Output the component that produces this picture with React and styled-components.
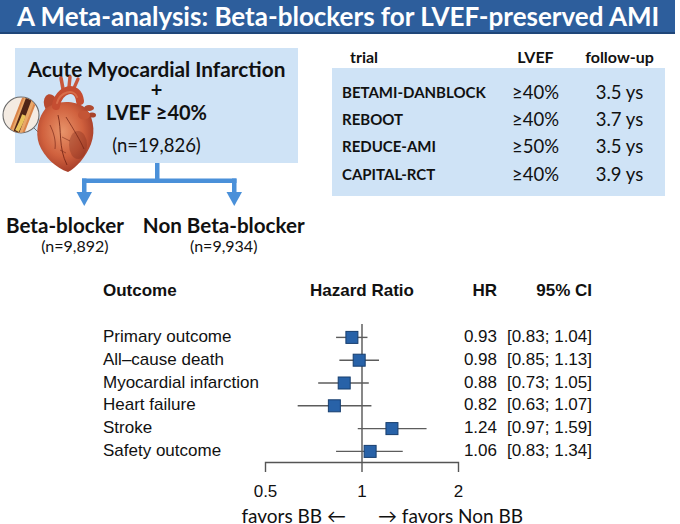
import React from "react";
import styled, { createGlobalStyle } from "styled-components";

const Global = createGlobalStyle`
  html, body { margin: 0; padding: 0; background: #fff; }
  body { font-family: Lato, "Open Sans", sans-serif; color: #111; }
`;

const CAL = `Lato, "Open Sans", sans-serif`;
const HEL = `"Liberation Sans", Arial, sans-serif`;

const Page = styled.div`
  width: 680px;
  height: 524px;
  overflow: hidden;
  background: #fff;
`;

const Header = styled.header`
  height: 32px;
  margin-right: 5px;
  background: #2d5e9c;
  border-bottom: 2px solid #1f4679;
  color: #fff;
  font: 700 26px ${CAL};
  display: flex;
  align-items: center;
  padding-left: 17px;
  white-space: nowrap;
`;

const Top = styled.section`
  display: flex;
  align-items: flex-start;
`;

const LeftCol = styled.div`
  position: relative;
  width: 320px;
  flex: none;
`;

const PopBox = styled.div`
  margin: 14px 0 0 15px;
  width: 283px;
  height: 115px;
  box-sizing: border-box;
  background: #cfe3f6;
  display: flex;
  flex-direction: column;
  align-items: center;
  padding-top: 10px;
  font-family: ${CAL};
`;

const BoxLine = styled.div`
  font-size: ${(p) => p.$size || 18}px;
  font-weight: ${(p) => (p.$bold ? 700 : 400)};
  line-height: ${(p) => p.$lh || 20}px;
  margin-top: ${(p) => p.$mt || 0}px;
  padding-left: ${(p) => p.$pl || 0}px;
  white-space: nowrap;
`;

const HeartArt = styled.svg`
  position: absolute;
  left: 0;
  top: 41px;
  width: 100px;
  height: 100px;
`;

const Connector = styled.svg`
  display: block;
  width: 320px;
  height: 43px;
`;

const Groups = styled.div`
  display: flex;
  margin-top: 8px;
  font-family: ${CAL};
`;

const Group = styled.div`
  display: flex;
  flex-direction: column;
  align-items: center;
  margin-left: ${(p) => p.$ml}px;
`;

const GroupName = styled.div`
  font-size: 20.6px;
  font-weight: 700;
  line-height: 22px;
  white-space: nowrap;
`;

const GroupN = styled.div`
  font-size: 16px;
  line-height: 20px;
  padding-left: ${(p) => p.$pl || 0}px;
  white-space: nowrap;
`;

const RightCol = styled.div`
  margin: 10px 0 0 12px;
  width: 333px;
  font-family: ${CAL};
`;

const TRow = styled.div`
  display: grid;
  grid-template-columns: ${(p) => p.$first}px 87px 81px;
  padding-left: ${(p) => p.$pl}px;
  align-items: center;
  height: ${(p) => p.$h}px;
`;

const TBody = styled.div`
  background: #cfe3f6;
  padding: 10px 0 9px;
`;

const THead = styled.span`
  font-size: 16px;
  font-weight: 700;
  text-align: ${(p) => (p.$center ? "center" : "left")};
`;

const TName = styled.span`
  font-size: 15px;
  font-weight: 700;
  white-space: nowrap;
`;

const TVal = styled.span`
  font-size: 18.5px;
  text-align: center;
  white-space: nowrap;
`;

const Forest = styled.section`
  margin: 24px 0 0 103px;
  display: grid;
  grid-template-columns: 152px 202px 40px 95px;
  grid-template-rows: 46px repeat(6, 22.8px) 42px;
  font-family: ${HEL};
  font-size: 17px;
`;

const FHead = styled.div`
  font-weight: 700;
  line-height: 22px;
  text-align: ${(p) => p.$align || "left"};
  padding-left: ${(p) => p.$pl || 0}px;
  white-space: nowrap;
`;

const FCell = styled.div`
  line-height: 22.8px;
  text-align: ${(p) => p.$align || "left"};
  white-space: nowrap;
  grid-column: ${(p) => p.$col};
`;

const Chart = styled.svg`
  grid-column: 2;
  grid-row: 2 / span 7;
  width: 215px;
  height: 178.8px;
  overflow: visible;
`;

const Favors = styled.div`
  display: grid;
  grid-template-columns: 346px auto;
  column-gap: 32px;
  font: 400 19px ${CAL};
  line-height: 22px;
`;

const FavorsText = styled.span`
  text-align: ${(p) => p.$align};
  white-space: nowrap;
`;

const trials = [
  ["BETAMI-DANBLOCK", "≥40%", "3.5 ys"],
  ["REBOOT", "≥40%", "3.7 ys"],
  ["REDUCE-AMI", "≥50%", "3.5 ys"],
  ["CAPITAL-RCT", "≥40%", "3.9 ys"],
];

const outcomes = [
  ["Primary outcome", 0.93, 0.83, 1.04],
  ["All\u2013cause death", 0.98, 0.85, 1.13],
  ["Myocardial infarction", 0.88, 0.73, 1.05],
  ["Heart failure", 0.82, 0.63, 1.07],
  ["Stroke", 1.24, 0.97, 1.59],
  ["Safety outcome", 1.06, 0.83, 1.34],
];

const X0 = 107;
const SCALE = 96.5;
const xOf = (v) => X0 + Math.log2(v) * SCALE;
const ROW = 22.8;

function Heart() {
  return (
    <HeartArt viewBox="0 0 100 100">
      <defs>
        <radialGradient id="hb" cx="0.45" cy="0.42" r="0.65">
          <stop offset="0" stopColor="#e8946a" />
          <stop offset="0.55" stopColor="#d0613e" />
          <stop offset="1" stopColor="#9a3322" />
        </radialGradient>
        <clipPath id="mag">
          <circle cx="21" cy="40" r="17.5" />
        </clipPath>
      </defs>
      <line x1="33" y1="52" x2="45" y2="64" stroke="#666" strokeWidth="0.9" />
      <path d="M63 14 L61 3" stroke="#c9573b" strokeWidth="3.6" strokeLinecap="round" />
      <path d="M69 12 L70 2" stroke="#c9573b" strokeWidth="3.4" strokeLinecap="round" />
      <path d="M74 13 L78 4" stroke="#c9573b" strokeWidth="3.2" strokeLinecap="round" />
      <ellipse cx="51" cy="29" rx="7" ry="10" fill="#b84a2f" transform="rotate(-15 51 29)" />
      <ellipse cx="89" cy="33" rx="5" ry="3" fill="#b04a30" />
      <ellipse cx="92" cy="40" rx="4" ry="2.6" fill="#a8442c" />
      <path
        d="M46 33 C38 42 35 57 39 69 C44 82 56 93 68 97 C76 93 86 82 91 69 C96 55 93 40 84 32 C76 26 62 26 54 29 Z"
        fill="url(#hb)"
      />
      <ellipse cx="78" cy="70" rx="9" ry="14" fill="#7d2a1c" opacity="0.35" />
      <path d="M56 31 C58 14 78 8 80 26" stroke="#c54d31" strokeWidth="8" fill="none" strokeLinecap="round" />
      <path d="M57 28 C60 17 74 13 77 22" stroke="#e07a55" strokeWidth="2" fill="none" strokeLinecap="round" opacity="0.7" />
      <ellipse cx="84" cy="40" rx="6" ry="4.5" fill="#c45536" />
      <path d="M58 40 C62 55 58 72 67 90" stroke="#6d1f12" strokeWidth="0.8" fill="none" />
      <path d="M66 42 C74 55 80 65 84 74" stroke="#6d1f12" strokeWidth="0.7" fill="none" />
      <path d="M50 50 C54 58 56 66 55 74" stroke="#6d1f12" strokeWidth="0.6" fill="none" />
      <path d="M62 62 L70 66 M60 75 L66 78" stroke="#6d1f12" strokeWidth="0.5" fill="none" />
      <circle cx="21" cy="40" r="18" fill="#f4ebe2" stroke="#6b6b6b" strokeWidth="1.1" />
      <g clipPath="url(#mag)">
        <path d="M32 18 L14 64" stroke="#d9844a" strokeWidth="15" />
        <path d="M32 18 L14 64" stroke="#e9a768" strokeWidth="11" />
        <path d="M31 18 L16 58" stroke="#4e2417" strokeWidth="6" />
        <path d="M24 40 C22 46 20 50 17 56" stroke="#e8c25a" strokeWidth="4" fill="none" />
      </g>
    </HeartArt>
  );
}

export default function App() {
  return (
    <Page>
      <Global />
      <Header>A Meta-analysis: Beta-blockers for LVEF-preserved AMI</Header>
      <Top>
        <LeftCol>
          <PopBox>
            <BoxLine $bold $size={20.8} $lh={22}>Acute Myocardial Infarction</BoxLine>
            <BoxLine $bold $size={20} $lh={18}>+</BoxLine>
            <BoxLine $bold $size={20} $lh={22} $mt={3}>LVEF ≥40%</BoxLine>
            <BoxLine $size={18.5} $lh={22} $mt={11}>(n=19,826)</BoxLine>
          </PopBox>
          <Heart />
          <Connector viewBox="0 0 320 43">
            <g fill="#4a90d9" stroke="none">
              <rect x="155" y="0" width="4.5" height="19" />
              <rect x="82" y="15.5" width="154.5" height="4.5" />
              <rect x="82" y="15.5" width="4.5" height="14" />
              <rect x="232" y="15.5" width="4.5" height="14" />
              <polygon points="76.5,29 92,29 84.25,43" />
              <polygon points="226.5,29 242,29 234.25,43" />
            </g>
          </Connector>
          <Groups>
            <Group $ml={6}>
              <GroupName>Beta-blocker</GroupName>
              <GroupN $pl={20}>(n=9,892)</GroupN>
            </Group>
            <Group $ml={19}>
              <GroupName>Non Beta-blocker</GroupName>
              <GroupN>(n=9,934)</GroupN>
            </Group>
          </Groups>
        </LeftCol>
        <RightCol>
          <TRow $first={142} $pl={18} $h={24}>
            <THead>trial</THead>
            <THead $center>LVEF</THead>
            <THead $center>follow-up</THead>
          </TRow>
          <TBody>
            {trials.map(([n, l, f]) => (
              <TRow key={n} $first={150} $pl={10} $h={27.3}>
                <TName>{n}</TName>
                <TVal>{l}</TVal>
                <TVal>{f}</TVal>
              </TRow>
            ))}
          </TBody>
        </RightCol>
      </Top>
      <Forest>
        <FHead>Outcome</FHead>
        <FHead $pl={12} $align="center">Hazard Ratio</FHead>
        <FHead $align="right">HR</FHead>
        <FHead $align="right">95% CI</FHead>
        {outcomes.map(([name, hr, lo, hi]) => (
          <React.Fragment key={name}>
            <FCell $col={1}>{name}</FCell>
            <FCell $col={3} $align="right">{hr.toFixed(2)}</FCell>
            <FCell $col={4} $align="right">[{lo.toFixed(2)}; {hi.toFixed(2)}]</FCell>
          </React.Fragment>
        ))}
        <Chart viewBox="0 0 215 178.8">
          <line x1={X0} y1={-2} x2={X0} y2={146} stroke="#555" strokeWidth="1.4" />
          <path d={`M${xOf(0.5)} 146 V136.5 H${xOf(2)} V146`} stroke="#555" strokeWidth="1.4" fill="none" />
          {outcomes.map(([name, hr, lo, hi], i) => {
            const y = ROW / 2 + i * ROW;
            const x = xOf(hr);
            return (
              <g key={name}>
                <line x1={xOf(lo)} y1={y} x2={xOf(hi)} y2={y} stroke="#5c5c5c" strokeWidth="1.4" />
                <rect x={x - 6} y={y - 6} width="12" height="12" fill="#2862a8" stroke="#173e6e" strokeWidth="1" />
              </g>
            );
          })}
          <g fontFamily={HEL} fontSize="17" fill="#111" textAnchor="middle">
            <text x={xOf(0.5)} y="171">0.5</text>
            <text x={X0} y="171">1</text>
            <text x={xOf(2)} y="171">2</text>
          </g>
        </Chart>
      </Forest>
      <Favors>
        <FavorsText $align="right">favors BB ←</FavorsText>
        <FavorsText $align="left">→ favors Non BB</FavorsText>
      </Favors>
    </Page>
  );
}
